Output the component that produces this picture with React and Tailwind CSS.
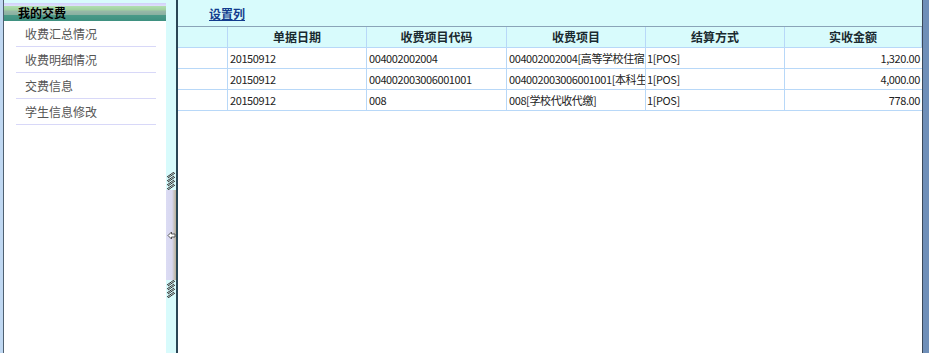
const menu = ["收费汇总情况", "收费明细情况", "交费信息", "学生信息修改"];

const rows = [
  { date: "20150912", code: "004002002004", item: "004002002004[高等学校住宿费]", way: "1[POS]", amt: "1,320.00" },
  { date: "20150912", code: "004002003006001001", item: "004002003006001001[本科生学费]", way: "1[POS]", amt: "4,000.00" },
  { date: "20150912", code: "008", item: "008[学校代收代缴]", way: "1[POS]", amt: "778.00" },
];

const cols = ["w-[50px]", "w-[139px]", "w-[140px]", "w-[139px]", "w-[139px]", ""];
const heads = ["", "单据日期", "收费项目代码", "收费项目", "结算方式", "实收金额"];

function Hatch() {
  return (
    <svg width="10" height="18" viewBox="0 0 10 18">
      {[0, 4, 8, 12].map((y) => (
        <path key={y} d={`M1 ${y + 5} L8 ${y} M2 ${y + 6} L9 ${y + 1}`} stroke="#333" strokeWidth="1" />
      ))}
    </svg>
  );
}

export default function App() {
  return (
    <div
      className="flex h-[353px] w-[929px] bg-white text-[12px] text-black overflow-hidden"
      style={{ fontFamily: '"Noto Sans CJK SC", "Liberation Sans", sans-serif' }}
    >
      <div className="w-[3px] bg-[#c0d8f2]" />
      <div className="w-[1px] bg-[#4f6070]" />

      {/* sidebar */}
      <div className="w-[162px] flex flex-col">
        <div className="h-[21px] flex items-end pl-[14px] pb-[2px] font-bold text-[12px] leading-none bg-[linear-gradient(to_bottom,#d8fbfc_0px,#d8fbfc_3px,#d0d0fa_3px,#e0e0fc_6px,#b0e0b0_6px,#a0d0a0_10px,#98b8a8_11px,#88b0a0_15px,#4a9a88_15px,#3e9080_21px)]">
          我的交费
        </div>
        <ul className="pl-[12px] pr-[10px]">
          {menu.map((m) => (
            <li key={m} className="h-[26px] flex items-center pl-[9px] text-[#555] border-b border-[#d8d8f8] leading-none">
              {m}
            </li>
          ))}
        </ul>
      </div>

      {/* splitter */}
      <div className="w-[10px] bg-[#d8fbfc] flex flex-col pt-[172px]">
        <Hatch />
        <div className="h-[90px] bg-[linear-gradient(to_right,#dcdcf4,#d8d8f0_60%,#b8b098)] flex items-center justify-center">
          <svg width="9" height="9" viewBox="0 0 9 9">
            <path d="M1 4.5 L4.5 1 L4.5 3 L8 3 L8 6 L4.5 6 L4.5 8 Z" fill="#fff" stroke="#444" strokeWidth="0.9" />
          </svg>
        </div>
        <Hatch />
      </div>
      <div className="w-[2px] bg-[#2a4656]" />

      {/* main */}
      <div className="flex-1 flex flex-col">
        <div className="h-[27px] bg-[#d8fbfc] border-b border-[#8aa4b8] flex items-center pl-[31px] pt-[2px]">
          <a href="#" className="font-bold underline text-[#123c8e] leading-none">设置列</a>
        </div>
        <div className="flex h-[21px] bg-[#d8fbfc] border-b border-[#b8d8f8] font-bold text-[#1a2a30]">
          {heads.map((h, i) => (
            <div key={i} className={`${cols[i] || "flex-1"} border-r border-[#b8d8f8] flex items-center justify-center leading-none`}>
              {h}
            </div>
          ))}
        </div>
        {rows.map((r, ri) => (
          <div key={ri} className="flex h-[21px] border-b border-[#b8d8f8] text-[11px] tracking-[-0.4px] text-[#222]">
            <div className="w-[50px] border-r border-[#b8d8f8]" />
            <div className="w-[139px] border-r border-[#b8d8f8] flex items-center pl-[2px] leading-none">{r.date}</div>
            <div className="w-[140px] border-r border-[#b8d8f8] flex items-center pl-[2px] leading-none">{r.code}</div>
            <div className="w-[139px] border-r border-[#b8d8f8] flex items-center pl-[2px] leading-none overflow-hidden whitespace-nowrap">{r.item}</div>
            <div className="w-[139px] border-r border-[#b8d8f8] flex items-center pl-[1px] leading-none">{r.way}</div>
            <div className="flex-1 flex items-center justify-end pr-[2px] leading-none">{r.amt}</div>
          </div>
        ))}
      </div>

      <div className="w-[1px] bg-[#3a4858]" />
      <div className="w-[6px] bg-[#6f8fb8]" />
    </div>
  );
}
